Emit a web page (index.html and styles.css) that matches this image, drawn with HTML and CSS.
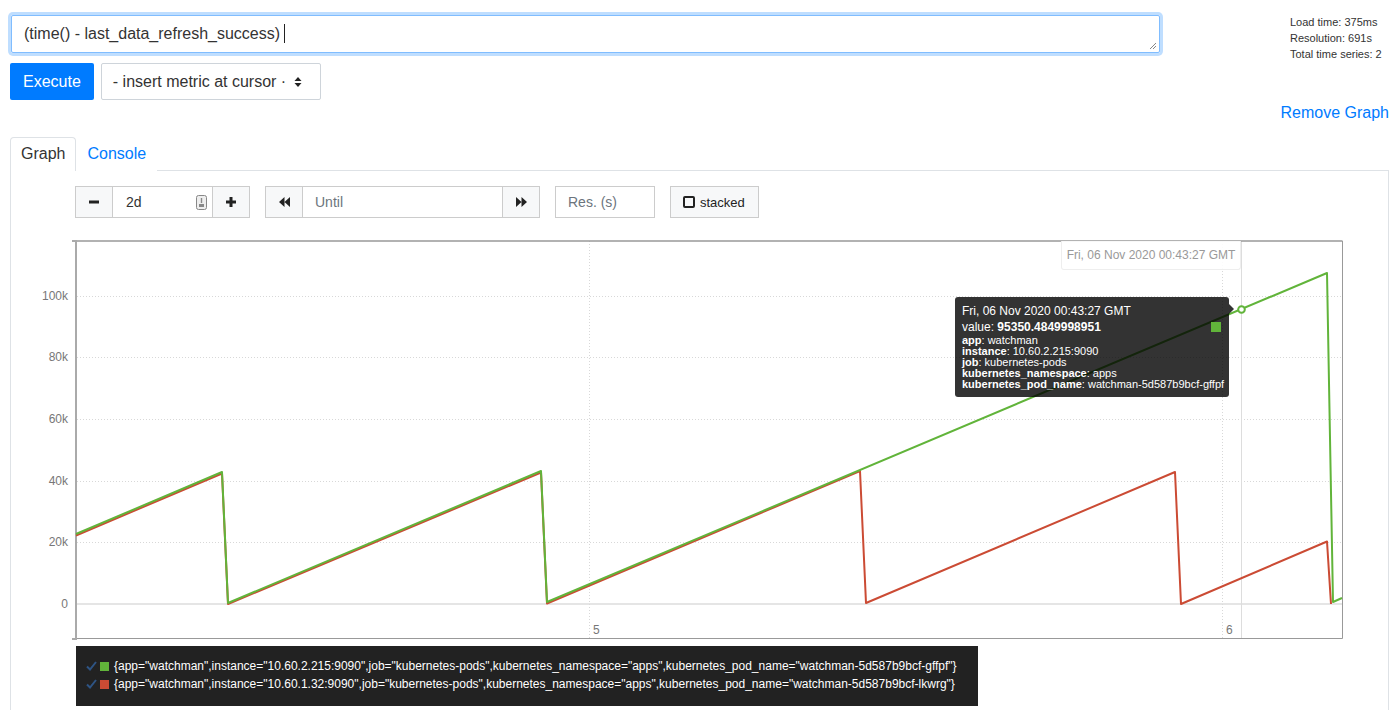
FILE: index.html
```html
<!DOCTYPE html>
<html>
<head>
<meta charset="utf-8">
<title>Prometheus Graph</title>
<link rel="stylesheet" href="styles.css">
</head>
<body>
<div class="page">
  <div class="query-row">
    <div class="expr">
      <span class="expr-text">(time() - last_data_refresh_success)</span><span class="caret"></span>
      <svg class="grip" width="8" height="8" viewBox="0 0 8 8"><path d="M7 1 L1 7 M7 4 L4 7" stroke="#888" stroke-width="1" fill="none"/></svg>
    </div>
    <div class="stats">
      <div>Load time: 375ms</div>
      <div>Resolution: 691s</div>
      <div>Total time series: 2</div>
    </div>
  </div>

  <div class="action-row">
    <button class="btn-execute">Execute</button>
    <div class="metric-select">
      <span>- insert metric at cursor ·</span>
      <svg width="8" height="12" viewBox="0 0 8 12"><path d="M4 1 L7.5 5 L0.5 5 Z M4 11 L7.5 7 L0.5 7 Z" fill="#222"/></svg>
    </div>
  </div>

  <div class="remove-row"><a class="link">Remove Graph</a></div>

  <div class="tabs">
    <div class="tab active">Graph</div>
    <div class="tab link">Console</div>
  </div>

  <div class="panel">
    <div class="controls">
      <div class="group">
        <div class="cbtn"><svg width="12" height="12" viewBox="0 0 12 12"><rect x="1" y="4.5" width="10" height="3" fill="#222"/></svg></div>
        <div class="cinput w-range">2d
          <svg class="keyicon" width="11" height="15" viewBox="0 0 11 15"><rect x="0.5" y="0.5" width="10" height="14" rx="2" fill="#eee" stroke="#888"/><rect x="3" y="9" width="5" height="3" fill="#888"/><path d="M5.5 3 L5.5 8" stroke="#888" stroke-width="1.4"/></svg>
        </div>
        <div class="cbtn"><svg width="12" height="12" viewBox="0 0 12 12"><rect x="1" y="4.5" width="10" height="3" fill="#222"/><rect x="4.5" y="1" width="3" height="10" fill="#222"/></svg></div>
      </div>
      <div class="group">
        <div class="cbtn"><svg width="13" height="12" viewBox="0 0 13 12"><path d="M6.5 1 L6.5 11 L1 6 Z M12 1 L12 11 L6.5 6 Z" fill="#222"/></svg></div>
        <div class="cinput w-until placeholder">Until</div>
        <div class="cbtn"><svg width="13" height="12" viewBox="0 0 13 12"><path d="M1 1 L1 11 L6.5 6 Z M6.5 1 L6.5 11 L12 6 Z" fill="#222"/></svg></div>
      </div>
      <div class="cinput w-res placeholder">Res. (s)</div>
      <div class="stacked"><span class="sq"></span>stacked</div>
    </div>

    <div class="chart">
      <svg class="plot" width="1377" height="410" viewBox="11 230 1377 410">
        <g stroke="#d8d8d8" stroke-width="1" stroke-dasharray="1,2" fill="none">
          <line x1="77" y1="296.5" x2="1342" y2="296.5"/>
          <line x1="77" y1="357.5" x2="1342" y2="357.5"/>
          <line x1="77" y1="419.5" x2="1342" y2="419.5"/>
          <line x1="77" y1="481.5" x2="1342" y2="481.5"/>
          <line x1="77" y1="542.5" x2="1342" y2="542.5"/>
          <line x1="589.5" y1="241" x2="589.5" y2="638"/>
          <line x1="1222.5" y1="241" x2="1222.5" y2="638"/>
        </g>
        <line x1="77" y1="604" x2="1342" y2="604" stroke="#ddd" stroke-width="1.5"/>
        <line x1="1241.5" y1="241" x2="1241.5" y2="638" stroke="#ddd" stroke-width="1"/>
        <g stroke="#999" fill="none">
          <line x1="76" y1="241" x2="1342.5" y2="241" stroke-width="1.5"/>
          <line x1="1342.5" y1="241" x2="1342.5" y2="638.5" stroke-width="1"/>
          <line x1="76" y1="638.5" x2="1342.5" y2="638.5" stroke-width="1"/>
        </g>
        <g stroke="#aaa" stroke-width="2" fill="none">
          <line x1="76" y1="240" x2="76" y2="640"/>
          <line x1="72" y1="241" x2="76" y2="241"/>
          <line x1="72" y1="639" x2="76" y2="639"/>
        </g>
        <g font-family="Liberation Sans, Arial, sans-serif" font-size="12" fill="#777" text-anchor="end">
          <text x="68" y="300">100k</text>
          <text x="68" y="361">80k</text>
          <text x="68" y="423">60k</text>
          <text x="68" y="485">40k</text>
          <text x="68" y="546">20k</text>
          <text x="68" y="608">0</text>
        </g>
        <g font-family="Liberation Sans, Arial, sans-serif" font-size="12" fill="#777">
          <text x="593" y="634">5</text>
          <text x="1226" y="634">6</text>
        </g>
        <polyline fill="none" stroke="#cb4b34" stroke-width="2" stroke-linejoin="round"
          points="76,535.5 222,473.5 228,604 541,472.5 547,603.5 860,471 866,603 1175,472 1181,604 1327,541.5 1331,604"/>
        <polyline fill="none" stroke="#61b43a" stroke-width="2" stroke-linejoin="round"
          points="76,534 222,472 228,603 541,471 547,602 1327,273 1333,602 1342,598"/>
        <circle cx="1241.5" cy="309.5" r="3.3" fill="#fff" stroke="#61b43a" stroke-width="2"/>
      </svg>

      <div class="hover-time">Fri, 06 Nov 2020 00:43:27 GMT</div>
      <div class="tooltip">
        <div class="tt-date">Fri, 06 Nov 2020 00:43:27 GMT</div>
        <div class="tt-value">value: <b>95350.4849998951</b></div>
        <div class="tt-label"><b>app</b>: watchman</div>
        <div class="tt-label"><b>instance</b>: 10.60.2.215:9090</div>
        <div class="tt-label"><b>job</b>: kubernetes-pods</div>
        <div class="tt-label"><b>kubernetes_namespace</b>: apps</div>
        <div class="tt-label"><b>kubernetes_pod_name</b>: watchman-5d587b9bcf-gffpf</div>
        <span class="tt-swatch"></span>
        <span class="tt-arrow"></span>
      </div>
    </div>

    <div class="legend">
      <div class="legend-row">
        <svg class="check" width="11" height="10" viewBox="0 0 11 10"><path d="M1 5.5 L4 8.5 L10 1" stroke="#2e5484" stroke-width="2" fill="none"/></svg>
        <span class="swatch green"></span>
        <span>{app="watchman",instance="10.60.2.215:9090",job="kubernetes-pods",kubernetes_namespace="apps",kubernetes_pod_name="watchman-5d587b9bcf-gffpf"}</span>
      </div>
      <div class="legend-row">
        <svg class="check" width="11" height="10" viewBox="0 0 11 10"><path d="M1 5.5 L4 8.5 L10 1" stroke="#2e5484" stroke-width="2" fill="none"/></svg>
        <span class="swatch red"></span>
        <span>{app="watchman",instance="10.60.1.32:9090",job="kubernetes-pods",kubernetes_namespace="apps",kubernetes_pod_name="watchman-5d587b9bcf-lkwrg"}</span>
      </div>
    </div>
  </div>
</div>
</body>
</html>
```

FILE: styles.css
```css
html, body {
  margin: 0;
  background: #fff;
}
body {
  font-family: "Liberation Sans", Arial, sans-serif;
  font-size: 16px;
  color: #212529;
  overflow: hidden;
}
.page {
  padding: 14px 7px 0 10px;
}
.query-row {
  display: flex;
  align-items: flex-start;
  height: 39px;
}
.expr {
  position: relative;
  width: 1149px;
  height: 38px;
  box-sizing: border-box;
  margin: 1px 0 0 1px;
  border: 1px solid #80bdff;
  box-shadow: 0 0 0 3px rgba(0, 123, 255, 0.25);
  border-radius: 2px;
  padding: 6px 12px;
  line-height: 24px;
  color: #333;
  white-space: nowrap;
}
.caret {
  display: inline-block;
  width: 1px;
  height: 19px;
  background: #222;
  vertical-align: -4px;
  margin-left: 4px;
}
.grip {
  position: absolute;
  right: 2px;
  bottom: 2px;
}
.stats {
  margin-left: auto;
  width: 99px;
  font-size: 11px;
  line-height: 16px;
  color: #333;
}
.action-row {
  display: flex;
  margin-top: 10px;
  height: 37px;
}
.btn-execute {
  height: 37px;
  padding: 0 13px;
  background: #007bff;
  color: #fff;
  border: none;
  border-radius: 2px;
  font-family: inherit;
  font-size: 16px;
}
.metric-select {
  margin-left: 7px;
  width: 220px;
  height: 37px;
  box-sizing: border-box;
  border: 1px solid #ced4da;
  border-radius: 2px;
  display: flex;
  align-items: center;
  padding: 0 12px 0 11px;
  gap: 8px;
  color: #333;
}
.remove-row {
  margin-top: 1px;
  text-align: right;
  line-height: 24px;
}
.link {
  color: #007bff;
}
.tabs {
  margin-top: 12px;
  display: flex;
  border-bottom: 1px solid #dee2e6;
}
.tab {
  padding: 4px 10px;
  line-height: 24px;
  border: 1px solid transparent;
  border-bottom: none;
  border-radius: 4px 4px 0 0;
  margin-bottom: -1px;
  background: #fff;
}
.tab.active {
  border-color: #dee2e6;
  color: #333;
  padding-bottom: 5px;
}
.tab.link {
  color: #007bff;
}
.panel {
  border: 1px solid #dee2e6;
  border-top: none;
  padding-top: 15px;
  height: 600px;
}
.controls {
  display: flex;
  margin-left: 64px;
  height: 32px;
  gap: 15px;
}
.group {
  display: flex;
}
.cbtn {
  width: 38px;
  height: 32px;
  box-sizing: border-box;
  background: #f7f8f9;
  border: 1px solid #ccc;
  display: flex;
  align-items: center;
  justify-content: center;
}
.group > * + * {
  margin-left: -1px;
}
.cinput {
  position: relative;
  height: 32px;
  box-sizing: border-box;
  border: 1px solid #ccc;
  background: #fff;
  padding: 0 12px;
  display: flex;
  align-items: center;
  font-size: 14px;
  color: #333;
}
.placeholder {
  color: #6c757d;
}
.w-range { width: 101px; padding-left: 13px; }
.w-until { width: 201px; }
.w-res { width: 100px; }
.keyicon {
  position: absolute;
  right: 5px;
  top: 8px;
}
.stacked {
  height: 32px;
  box-sizing: border-box;
  width: 89px;
  border: 1px solid #ccc;
  background: #f7f8f9;
  display: flex;
  align-items: center;
  padding-left: 12px;
  font-size: 13px;
  color: #222;
}
.sq {
  width: 8px;
  height: 8px;
  border: 2px solid #222;
  border-radius: 2px;
  margin-right: 5px;
}
.chart {
  position: relative;
  margin-top: 12px;
  height: 410px;
}
.plot {
  display: block;
}
.hover-time {
  position: absolute;
  left: 1050px;
  top: 11px;
  width: 180px;
  height: 29px;
  box-sizing: border-box;
  border: 1px solid #eee;
  border-top: none;
  border-radius: 0 0 3px 3px;
  background: rgba(255, 255, 255, 0.9);
  font-size: 12px;
  line-height: 28px;
  color: #999;
  text-align: center;
}
.tooltip {
  position: absolute;
  left: 944px;
  top: 67px;
  width: 274px;
  height: 100px;
  box-sizing: border-box;
  padding: 6px 7px;
  background: rgba(0, 0, 0, 0.8);
  border-radius: 3px;
  color: #fff;
  white-space: nowrap;
}
.tt-date, .tt-value {
  font-size: 12px;
  line-height: 16px;
}
.tt-label {
  font-size: 11px;
  line-height: 11px;
}
.tt-swatch {
  position: absolute;
  right: 8px;
  top: 25px;
  width: 10px;
  height: 10px;
  background: #61b43a;
}
.tt-arrow {
  position: absolute;
  right: -5px;
  top: 7px;
  width: 0;
  height: 0;
  border-top: 5px solid transparent;
  border-bottom: 5px solid transparent;
  border-left: 5px solid rgba(0, 0, 0, 0.8);
}
.legend {
  display: inline-block;
  margin: 6px 0 0 65px;
  background: #222;
  padding: 11px 21px 13px 10px;
  color: #fff;
  font-size: 12px;
  line-height: 18px;
  white-space: nowrap;
}
.legend-row {
  display: flex;
  align-items: center;
}
.check {
  margin-right: 3px;
}
.swatch {
  width: 9px;
  height: 9px;
  margin-right: 5px;
}
.swatch.green { background: #61b43a; }
.swatch.red { background: #cb4b34; }
```
